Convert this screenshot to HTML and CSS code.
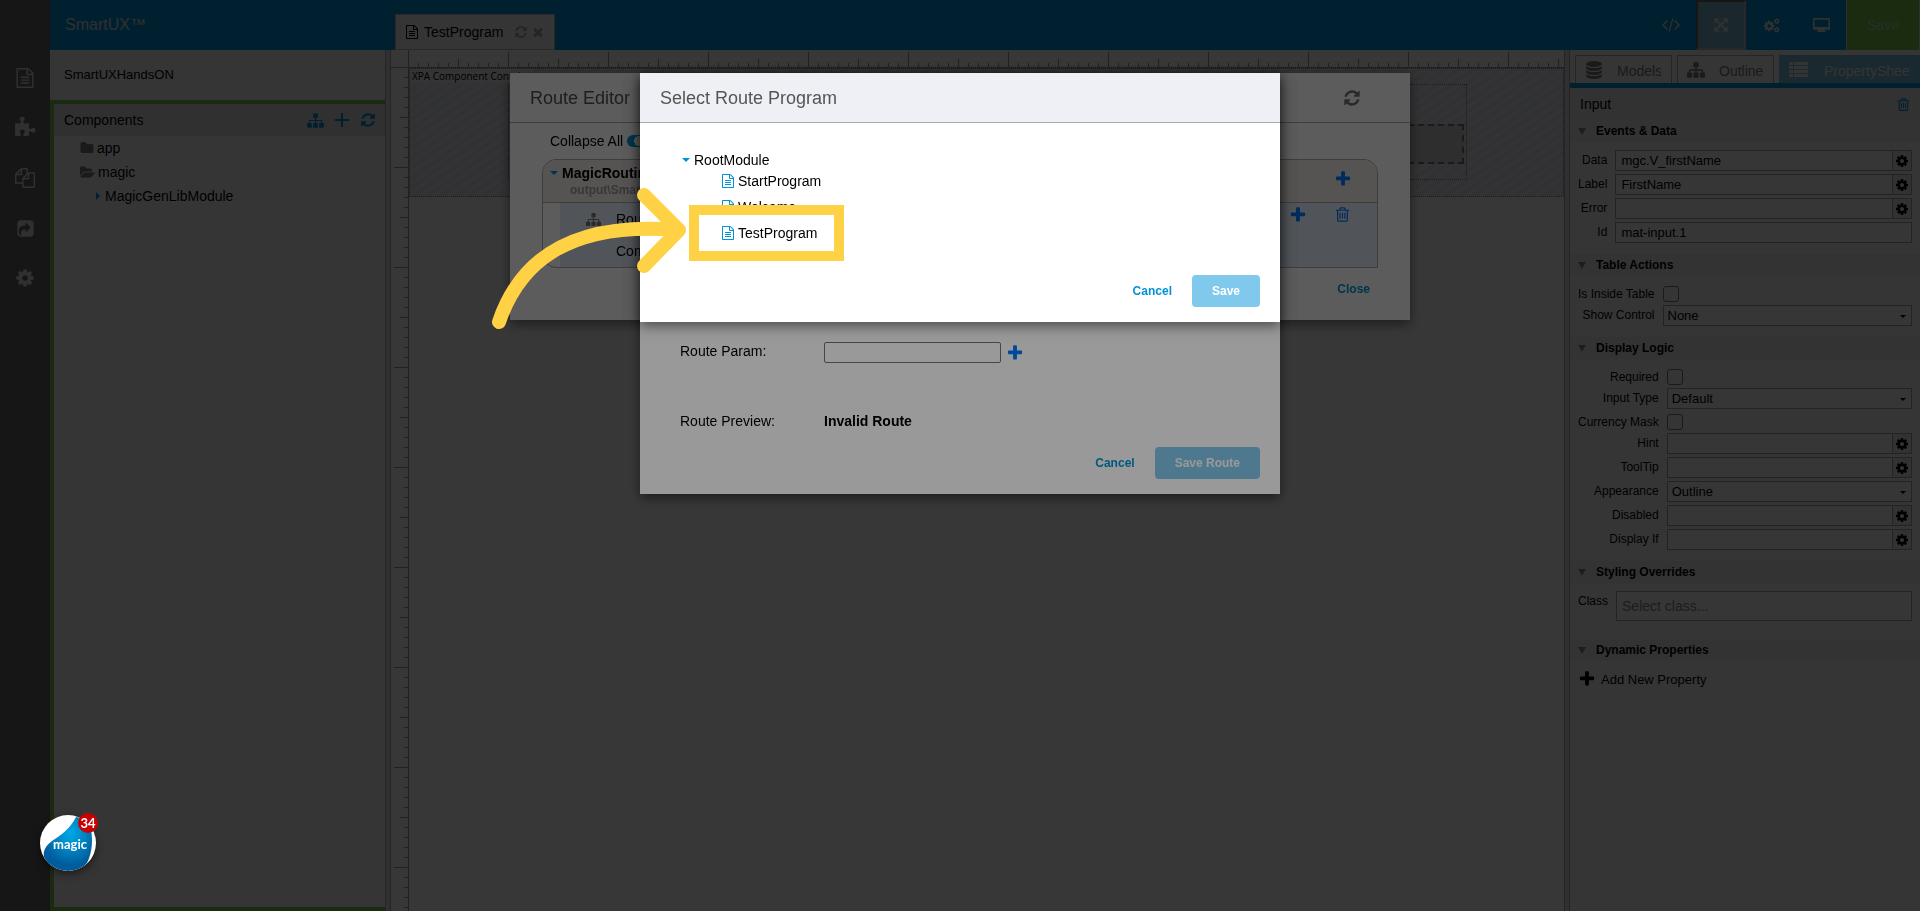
FILE: index.html
```html
<!DOCTYPE html>
<html lang="en">

<head>
    <meta charset="UTF-8">
    <meta name="viewport" content="width=device-width, initial-scale=1.0">
    <title>SmartUX</title>
    <link rel="stylesheet" href="styles.css">
</head>

<body>
    <!-- Icon set -->
    <svg class="sprite" aria-hidden="true">
        <symbol id="i-file" viewBox="0 0 1792 1792"><path d="M1596 380q28 28 48 76t20 88v1152q0 40-28 68t-68 28h-1344q-40 0-68-28t-28-68v-1600q0-40 28-68t68-28h896q40 0 88 20t76 48zm-444-244v376h376q-10-29-22-41l-313-313q-12-12-41-22zm384 1528v-1024h-416q-40 0-68-28t-28-68v-416h-768v1536h1280zm-1024-864q0-14 9-23t23-9h704q14 0 23 9t9 23v64q0 14-9 23t-23 9h-704q-14 0-23-9t-9-23v-64zm736 224q14 0 23 9t9 23v64q0 14-9 23t-23 9h-704q-14 0-23-9t-9-23v-64q0-14 9-23t23-9h704zm0 256q14 0 23 9t9 23v64q0 14-9 23t-23 9h-704q-14 0-23-9t-9-23v-64q0-14 9-23t23-9h704z"/></symbol>
        <symbol id="i-puzzle" viewBox="0 0 1792 1792"><path d="M1755 1082q0 81-44.5 135t-123.5 54q-41 0-77.5-17.5t-59-38-56.5-38-71-17.5q-110 0-110 124 0 39 16 115t15 115v5q-22 0-33 1-34 3-97.5 11.5t-115.5 13.5-98 5q-61 0-103-26.5t-42-83.5q0-37 17.5-71t38-56.5 38-59 17.5-77.5q0-79-54-123.5t-135-44.5q-84 0-143 45.5t-59 127.5q0 43 15 83t33.5 64.5 33.5 53 15 50.5q0 45-46 89-37 35-117 35-95 0-245-24-9-2-27.5-4t-27.5-4l-13-2q-1 0-3-1-2 0-2-1v-1024q2 1 17.5 3.5t34 5 21.5 3.5q150 24 245 24 80 0 117-35 46-44 46-89 0-22-15-50.5t-33.5-53-33.5-64.5-15-83q0-82 59-127.5t144-45.5q80 0 134 44.5t54 123.5q0 41-17.5 77.5t-38 59-38 56.5-17.5 71q0 57 42 83.5t103 26.5q64 0 180-15t163-17v2q-1 2-3.5 17.5t-5 34-3.5 21.5q-24 150-24 245 0 80 35 117 44 46 89 46 22 0 50.5-15t53-33.5 64.5-33.5 83-15q82 0 127.5 59t45.5 143z"/></symbol>
        <symbol id="i-files" viewBox="0 0 1792 1792"><path d="M1696 384q40 0 68 28t28 68v1216q0 40-28 68t-68 28h-960q-40 0-68-28t-28-68v-288h-544q-40 0-68-28t-28-68v-672q0-40 20-88t48-76l408-408q28-28 76-48t88-20h416q40 0 68 28t28 68v328q68-40 128-40h416zm-544 213l-299 299h299v-299zm-640-384l-299 299h299v-299zm196 647l316-316v-416h-384v416q0 40-28 68t-68 28h-416v640h512v-256q0-40 20-88t48-76zm956 804v-1152h-384v416q0 40-28 68t-68 28h-416v640h896z"/></symbol>
        <symbol id="i-share" viewBox="0 0 1792 1792"><path d="M1005 1197l352-352q19-19 19-45t-19-45l-352-352q-30-31-70-14-39 17-39 59v160q-119 0-216 19.5t-162.5 51-114 79-76.5 95.5-44.5 109-21.5 111.5-5 110.5q0 181 167 404 11 12 25 12 7 0 13-3 22-9 19-33-44-354 62-473 46-52 130-75.5t224-23.5v160q0 42 39 59 13 5 25 5 26 0 45-19zm659-781v960q0 119-84.5 203.5t-203.5 84.5h-960q-119 0-203.5-84.5t-84.5-203.5v-960q0-119 84.5-203.5t203.5-84.5h960q119 0 203.5 84.5t84.5 203.5z"/></symbol>
        <symbol id="i-cog" viewBox="0 0 1792 1792"><path d="M1152 896q0-106-75-181t-181-75-181 75-75 181 75 181 181 75 181-75 75-181zm512-109v222q0 12-8 23t-20 13l-185 28q-19 54-39 91 35 50 107 138 10 12 10 25t-9 23q-27 37-99 108t-94 71q-12 0-26-9l-138-108q-44 23-91 38-16 136-29 186-7 28-36 28h-222q-14 0-24.5-8.5t-11.5-21.5l-28-184q-49-16-90-37l-141 107q-10 9-25 9-14 0-25-11-126-114-165-168-7-10-7-23 0-12 8-23 15-21 51-66.5t54-70.5q-27-50-41-99l-183-27q-13-2-21-12.5t-8-23.5v-222q0-12 8-23t19-13l186-28q14-46 39-92-40-57-107-138-10-12-10-24 0-10 9-23 26-36 98.5-107.5t94.5-71.5q13 0 26 10l138 107q44-23 91-38 16-136 29-186 7-28 36-28h222q14 0 24.5 8.5t11.5 21.5l28 184q49 16 90 37l142-107q9-9 24-9 13 0 25 10 129 119 165 170 7 8 7 22 0 12-8 23-15 21-51 66.5t-54 70.5q26 50 41 98l183 28q13 2 21 12.5t8 23.5z"/></symbol>
        <symbol id="i-cogs" viewBox="0 0 18 16"><use href="#i-cog" x="0" y="2" width="13" height="13"/><use href="#i-cog" x="11" y="0" width="7" height="7"/><use href="#i-cog" x="11" y="9" width="7" height="7"/></symbol>
        <symbol id="i-sitemap" viewBox="0 0 1792 1792"><path d="M1792 1248v320q0 40-28 68t-68 28h-320q-40 0-68-28t-28-68v-320q0-40 28-68t68-28h96v-192h-512v192h96q40 0 68 28t28 68v320q0 40-28 68t-68 28h-320q-40 0-68-28t-28-68v-320q0-40 28-68t68-28h96v-192h-512v192h96q40 0 68 28t28 68v320q0 40-28 68t-68 28h-320q-40 0-68-28t-28-68v-320q0-40 28-68t68-28h96v-192q0-52 38-90t90-38h512v-192h-96q-40 0-68-28t-28-68v-320q0-40 28-68t68-28h320q40 0 68 28t28 68v320q0 40-28 68t-68 28h-96v192h512q52 0 90 38t38 90v192h96q40 0 68 28t28 68z"/></symbol>
        <symbol id="i-plus" viewBox="0 0 1792 1792"><path d="M1600 736v192q0 40-28 68t-68 28h-416v416q0 40-28 68t-68 28h-192q-40 0-68-28t-28-68v-416h-416q-40 0-68-28t-28-68v-192q0-40 28-68t68-28h416v-416q0-40 28-68t68-28h192q40 0 68 28t28 68v416h416q40 0 68 28t28 68z"/></symbol>
        <symbol id="i-plus-thin" viewBox="0 0 14 14"><path d="M6 0h2v6h6v2h-6v6h-2v-6h-6v-2h6z"/></symbol>
        <symbol id="i-refresh" viewBox="0 0 1792 1792"><path d="M1639 1056q0 5-1 7-64 268-268 434.5t-478 166.5q-146 0-282.5-55t-243.5-157l-129 129q-19 19-45 19t-45-19-19-45v-448q0-26 19-45t45-19h448q26 0 45 19t19 45-19 45l-137 137q71 66 161 102t187 36q134 0 250-65t186-179q11-17 53-117 8-23 30-23h192q13 0 22.5 9.5t9.5 22.5zm25-800v448q0 26-19 45t-45 19h-448q-26 0-45-19t-19-45 19-45l138-138q-148-137-349-137-134 0-250 65t-186 179q-11 17-53 117-8 23-30 23h-199q-13 0-22.5-9.5t-9.5-22.5v-7q65-268 270-434.5t480-166.5q146 0 284 55.5t245 156.5l130-129q19-19 45-19t45 19 19 45z"/></symbol>
        <symbol id="i-times" viewBox="0 0 1792 1792"><path d="M1490 1322q0 40-28 68l-136 136q-28 28-68 28t-68-28l-294-294-294 294q-28 28-68 28t-68-28l-136-136q-28-28-28-68t28-68l294-294-294-294q-28-28-28-68t28-68l136-136q28-28 68-28t68 28l294 294 294-294q28-28 68-28t68 28l136 136q28 28 28 68t-28 68l-294 294 294 294q28 28 28 68z"/></symbol>
        <symbol id="i-folder" viewBox="0 0 1792 1792"><path d="M1728 608v704q0 92-66 158t-158 66h-1216q-92 0-158-66t-66-158v-960q0-92 66-158t158-66h320q92 0 158 66t66 158v32h672q92 0 158 66t66 158z"/></symbol>
        <symbol id="i-folder-open" viewBox="0 0 1920 1792"><path d="M1879 952q0 31-31 66l-336 396q-43 51-120.5 86.5t-143.5 35.5h-1088q-34 0-60.5-13t-26.5-43q0-31 31-66l336-396q43-51 120.5-86.5t143.5-35.5h1088q34 0 60.5 13t26.5 43zm-343-344v160h-832q-94 0-197 47.5t-164 119.5l-337 396-5 6q0-4-.5-12.5t-.5-12.5v-960q0-92 66-158t158-66h320q92 0 158 66t66 158v32h544q92 0 158 66t66 158z"/></symbol>
        <symbol id="i-trash" viewBox="0 0 1792 1792"><path d="M704 736v576q0 14-9 23t-23 9h-64q-14 0-23-9t-9-23v-576q0-14 9-23t23-9h64q14 0 23 9t9 23zm256 0v576q0 14-9 23t-23 9h-64q-14 0-23-9t-9-23v-576q0-14 9-23t23-9h64q14 0 23 9t9 23zm256 0v576q0 14-9 23t-23 9h-64q-14 0-23-9t-9-23v-576q0-14 9-23t23-9h64q14 0 23 9t9 23zm128 724v-948h-896v948q0 22 7 40.5t14.5 27 10.5 8.5h832q3 0 10.5-8.5t14.5-27 7-40.5zm-672-1076h448l-48-117q-7-9-17-11h-317q-10 2-17 11zm928 32v64q0 14-9 23t-23 9h-96v948q0 83-47 143.5t-113 60.5h-832q-66 0-113-58.5t-47-141.5v-952h-96q-14 0-23-9t-9-23v-64q0-14 9-23t23-9h309l70-167q15-37 54-63t79-26h320q40 0 79 26t54 63l70 167h309q14 0 23 9t9 23z"/></symbol>
        <symbol id="i-code" viewBox="0 0 2048 1920"><path d="M681 1399l-50 50q-10 10-23 10t-23-10l-466-466q-10-10-10-23t10-23l466-466q10-10 23-10t23 10l50 50q10 10 10 23t-10 23l-393 393 393 393q10 10 10 23t-10 23zm591-1067l-373 1291q-4 13-15.5 19.5t-23.5 2.5l-62-17q-13-4-19.5-15.5t-2.5-24.5l373-1291q4-13 15.5-19.5t23.5-2.5l62 17q13 4 19.5 15.5t2.5 24.5zm657 651l-466 466q-10 10-23 10t-23-10l-50-50q-10-10-10-23t10-23l393-393-393-393q-10-10-10-23t10-23l50-50q10-10 23-10t23 10l466 466q10 10 10 23t-10 23z"/></symbol>
        <symbol id="i-expand" viewBox="0 0 1792 1792"><path d="M1411 541l-355 355 355 355 144-144q29-31 70-14 39 17 39 59v448q0 26-19 45t-45 19h-448q-42 0-59-40-17-39 14-69l144-144-355-355-355 355 144 144q31 30 14 69-17 40-59 40h-448q-26 0-45-19t-19-45v-448q0-42 40-59 39-17 69 14l144 144 355-355-355-355-144 144q-19 19-45 19-12 0-24-5-40-17-40-59v-448q0-26 19-45t45-19h448q42 0 59 40 17 39-14 69l-144 144 355 355 355-355-144-144q-31-30-14-69 17-40 59-40h448q26 0 45 19t19 45v448q0 42-39 59-13 5-25 5-26 0-45-19z"/></symbol>
        <symbol id="i-desktop" viewBox="0 0 16 14"><path fill-rule="evenodd" d="M1 0h14a1 1 0 0 1 1 1v9a1 1 0 0 1-1 1h-4v1h1v1h-8v-1h1v-1h-4a1 1 0 0 1-1-1v-9a1 1 0 0 1 1-1zm.5 1.500v7h13v-7z"/></symbol>
        <symbol id="i-database" viewBox="0 0 16 18"><ellipse cx="8" cy="3" rx="8" ry="3"/><path d="M0 5q2 2 8 2t8-2v2q-1 3-8 3t-8-3zM0 9q2 2 8 2t8-2v2q-1 3-8 3t-8-3zM0 13q2 2 8 2t8-2v2q-1 3-8 3t-8-3z"/></symbol>
        <symbol id="i-list" viewBox="0 0 19 15"><path d="M0 0h4v3h-4zM5 0h14v3h-14zM0 4h4v3h-4zM5 4h14v3h-14zM0 8h4v3h-4zM5 8h14v3h-14zM0 12h4v3h-4zM5 12h14v3h-14z"/></symbol>
    </svg>

    <div class="app">
        <nav class="rail">
            <button aria-label="Programs"><svg class="icon icon-20"><use href="#i-file"/></svg></button>
            <button aria-label="Components"><svg class="icon icon-22"><use href="#i-puzzle"/></svg></button>
            <button aria-label="Templates"><svg class="icon icon-20"><use href="#i-files"/></svg></button>
            <button aria-label="Publish"><svg class="icon icon-19"><use href="#i-share"/></svg></button>
            <button aria-label="Settings"><svg class="icon icon-20"><use href="#i-cog"/></svg></button>
        </nav>

        <div class="main">
            <header class="topbar">
                <div class="brand">SmartUX™</div>
                <div class="file-tab">
                    <svg class="icon icon-14"><use href="#i-file"/></svg>
                    <span>TestProgram</span>
                    <button aria-label="Reload"><svg class="icon icon-14"><use href="#i-refresh"/></svg></button>
                    <button aria-label="Close tab"><svg class="icon icon-14"><use href="#i-times"/></svg></button>
                </div>
                <div class="toolbar">
                    <button aria-label="Code"><svg class="icon icon-20"><use href="#i-code"/></svg></button>
                    <button class="pressed" aria-label="Fit"><svg class="icon icon-16"><use href="#i-expand"/></svg></button>
                    <button aria-label="Options"><svg class="icon icon-17"><use href="#i-cogs"/></svg></button>
                    <button aria-label="Preview"><svg class="icon icon-17"><use href="#i-desktop"/></svg></button>
                    <button class="save-main">Save</button>
                </div>
            </header>

            <div class="workspace">
                <aside class="left-panel">
                    <div class="project-name">SmartUXHandsON</div>
                    <div class="components">
                        <div class="components-head">
                            <span>Components</span>
                            <button aria-label="Tree view"><svg class="icon icon-17"><use href="#i-sitemap"/></svg></button>
                            <button aria-label="Add component"><svg class="icon icon-14"><use href="#i-plus-thin"/></svg></button>
                            <button aria-label="Refresh"><svg class="icon icon-16"><use href="#i-refresh"/></svg></button>
                        </div>
                        <ul class="folders">
                            <li><svg class="icon icon-14"><use href="#i-folder"/></svg>app</li>
                            <li><svg class="icon icon-15"><use href="#i-folder-open"/></svg>magic</li>
                            <li class="module"><i class="caret-right"></i>MagicGenLibModule</li>
                        </ul>
                    </div>
                </aside>
                <div class="splitter"></div>
                <main class="canvas">
                    <div class="ruler-corner"></div>
                    <div class="ruler-x"></div>
                    <div class="ruler-y"></div>
                    <div class="stage">
                        <div class="container-title">XPA Component Container</div>
                        <div class="drop-area">
                            <div class="drop-field"></div>
                        </div>
                    </div>
                </main>
                <div class="splitter"></div>

                <aside class="right-panel">
                    <div class="side-tabs">
                        <button><svg class="icon icon-18"><use href="#i-database"/></svg><span>Models</span></button>
                        <button><svg class="icon icon-18"><use href="#i-sitemap"/></svg><span>Outline</span></button>
                        <button class="active"><svg class="icon icon-19"><use href="#i-list"/></svg><span>PropertyShee</span></button>
                    </div>
                    <div class="sheet-head">
                        <span>Input</span>
                        <button aria-label="Delete"><svg class="icon icon-15"><use href="#i-trash"/></svg></button>
                    </div>

                    <h2 class="section">Events &amp; Data</h2>
                    <div class="props">
                        <label for="data">Data</label>
                        <div class="field"><input id="data" type="text" value="mgc.V_firstName"><button aria-label="Edit data"><svg class="icon icon-14"><use href="#i-cog"/></svg></button></div>
                        <label for="label">Label</label>
                        <div class="field"><input id="label" type="text" value="FirstName"><button aria-label="Edit label"><svg class="icon icon-14"><use href="#i-cog"/></svg></button></div>
                        <label for="error">Error</label>
                        <div class="field"><input id="error" type="text"><button aria-label="Edit error"><svg class="icon icon-14"><use href="#i-cog"/></svg></button></div>
                        <label for="id">Id</label>
                        <div class="field"><input id="id" type="text" value="mat-input.1"></div>
                    </div>

                    <h2 class="section">Table Actions</h2>
                    <div class="props">
                        <label for="inside">Is Inside Table</label>
                        <input id="inside" type="checkbox">
                        <label for="control">Show Control</label>
                        <div class="field select"><select id="control"><option>None</option></select></div>
                    </div>

                    <h2 class="section">Display Logic</h2>
                    <div class="props">
                        <label for="required">Required</label>
                        <input id="required" type="checkbox">
                        <label for="type">Input Type</label>
                        <div class="field select"><select id="type"><option>Default</option></select></div>
                        <label for="mask">Currency Mask</label>
                        <input id="mask" type="checkbox">
                        <label for="hint">Hint</label>
                        <div class="field"><input id="hint" type="text"><button aria-label="Edit hint"><svg class="icon icon-14"><use href="#i-cog"/></svg></button></div>
                        <label for="tooltip">ToolTip</label>
                        <div class="field"><input id="tooltip" type="text"><button aria-label="Edit tooltip"><svg class="icon icon-14"><use href="#i-cog"/></svg></button></div>
                        <label for="appearance">Appearance</label>
                        <div class="field select"><select id="appearance"><option>Outline</option></select></div>
                        <label for="disabled">Disabled</label>
                        <div class="field"><input id="disabled" type="text"><button aria-label="Edit disabled"><svg class="icon icon-14"><use href="#i-cog"/></svg></button></div>
                        <label for="displayIf">Display If</label>
                        <div class="field"><input id="displayIf" type="text"><button aria-label="Edit display if"><svg class="icon icon-14"><use href="#i-cog"/></svg></button></div>
                    </div>

                    <h2 class="section">Styling Overrides</h2>
                    <div class="props props-class">
                        <label for="class">Class</label>
                        <div class="field field-tall"><input id="class" type="text" placeholder="Select class..."></div>
                    </div>

                    <h2 class="section">Dynamic Properties</h2>
                    <button class="add-property"><svg class="icon icon-18"><use href="#i-plus"/></svg>Add New Property</button>
                </aside>
            </div>
        </div>
    </div>

    <!-- Route editor -->
    <div class="overlay">
        <div class="dialog dialog-wide">
            <div class="dialog-head">
                <h1>Route Editor</h1>
                <button aria-label="Refresh routes"><svg class="icon icon-18"><use href="#i-refresh"/></svg></button>
            </div>
            <div class="editor-body">
                <div class="collapse-row">
                    <label for="collapse">Collapse All</label>
                    <input id="collapse" class="toggle" type="checkbox" checked>
                </div>
                <div class="route-card">
                    <div class="route-card-head">
                        <i class="caret-down"></i>
                        <div class="route-name">
                            <strong>MagicRouting</strong>
                            <small>output\SmartUX</small>
                        </div>
                        <button aria-label="Add route"><svg class="icon icon-18"><use href="#i-plus"/></svg></button>
                    </div>
                    <div class="route-row">
                        <svg class="icon icon-15 route-icon"><use href="#i-sitemap"/></svg>
                        <div class="route-labels">
                            <span>Route</span>
                            <span>Component</span>
                        </div>
                        <button aria-label="Add child route"><svg class="icon icon-18"><use href="#i-plus"/></svg></button>
                        <button aria-label="Delete route"><svg class="icon icon-17"><use href="#i-trash"/></svg></button>
                    </div>
                </div>
            </div>
            <div class="editor-foot"><button class="link-btn">Close</button></div>
        </div>
    </div>

    <!-- Add route -->
    <div class="overlay">
        <div class="dialog dialog-route">
            <div class="route-form">
                <label for="param">Route Param:</label>
                <div class="param-field">
                    <input id="param" type="text">
                    <button aria-label="Add param"><svg class="icon icon-18"><use href="#i-plus"/></svg></button>
                </div>
                <span>Route Preview:</span>
                <strong>Invalid Route</strong>
            </div>
            <div class="dialog-foot">
                <button class="link-btn">Cancel</button>
                <button class="save-btn">Save Route</button>
            </div>
        </div>
    </div>

    <!-- Program picker -->
    <div class="overlay">
        <div class="dialog">
            <div class="dialog-head head-tinted">
                <h1>Select Route Program</h1>
            </div>
            <div class="program-tree">
                <div class="tree-root"><i class="caret-down"></i>RootModule</div>
                <ul class="programs">
                    <li><svg class="icon icon-14"><use href="#i-file"/></svg>StartProgram</li>
                    <li><svg class="icon icon-14"><use href="#i-file"/></svg>Welcome</li>
                    <li><svg class="icon icon-14"><use href="#i-file"/></svg>TestProgram</li>
                </ul>
            </div>
            <div class="dialog-foot">
                <button class="link-btn">Cancel</button>
                <button class="save-btn">Save</button>
            </div>
            <div class="highlight"></div>
            <svg class="arrow" viewBox="0 0 220 160">
                <path d="M19 139C38 83 84 37 199 47M164 12l35 35-35 36"/>
            </svg>
        </div>
    </div>

    <div class="magic-widget">
        <svg class="magic-drop" viewBox="0 0 56 56">
            <defs>
                <radialGradient id="drop" cx="0.55" cy="0.3" r="0.6">
                    <stop offset="0" stop-color="#00a9e6"/>
                    <stop offset="0.300" stop-color="#0094d2"/>
                    <stop offset="1" stop-color="#005c9c"/>
                </radialGradient>
            </defs>
            <path fill="url(#drop)" d="M36 2C30 14 21 20 12 26C2 33 2 42 7 47C13 53 21 56 28 56C38 56 45 52 48 46C52 36 53 26 51 15C48 9 43 3 36 2z"/>
        </svg>
        <span class="magic-text">magic</span>
        <span class="magic-badge">34</span>
    </div>
</body>

</html>
```
FILE: styles.css
```css
:root {
    --blue: #0093d9;
    --green: #7cc648;
    --panel: #f6f6f6;
    --strip: #e6e6e6;
    --line: #a0a0a0;
    --plus: #007bff;
}

* {
    box-sizing: border-box;
}

body {
    margin: 0;
    font-family: "Liberation Sans", Arial, sans-serif;
    font-size: 14px;
    color: #000;
    overflow: hidden;
}

button {
    display: flex;
    align-items: center;
    padding: 0;
    border: none;
    background: none;
    font: inherit;
    color: inherit;
    cursor: pointer;
}

h1,
h2,
ul {
    margin: 0;
    padding: 0;
    list-style: none;
}

.sprite {
    position: absolute;
    width: 0;
    height: 0;
}

.icon {
    display: block;
    flex: none;
    fill: currentColor;
}

.icon-14 { width: 14px; height: 14px; }
.icon-15 { width: 15px; height: 15px; }
.icon-16 { width: 16px; height: 16px; }
.icon-17 { width: 17px; height: 17px; }
.icon-18 { width: 18px; height: 18px; }
.icon-19 { width: 19px; height: 19px; }
.icon-20 { width: 20px; height: 20px; }
.icon-22 { width: 22px; height: 22px; }

.caret-down {
    flex: none;
    border: 4px solid transparent;
    border-top-color: var(--blue);
    border-bottom: none;
}

.caret-right {
    flex: none;
    border: 4px solid transparent;
    border-left-color: var(--blue);
    border-right: none;
}

/* Layout */
.app {
    display: flex;
    height: 100vh;
}

.rail {
    width: 50px;
    padding-top: 53px;
    background: #666;
    color: #ddd;
}

.rail button {
    width: 100%;
    height: 50px;
    justify-content: center;
}

.main {
    flex: 1;
    display: flex;
    flex-direction: column;
    min-width: 0;
}

.topbar {
    display: flex;
    height: 50px;
    background: var(--blue);
}

.brand {
    width: 345px;
    padding: 16px 15px;
    font-size: 16px;
    line-height: 18px;
    color: #ddd;
}

.file-tab {
    display: flex;
    align-items: center;
    align-self: flex-end;
    gap: 5px;
    height: 36px;
    padding: 0 9px;
    border: 1px solid #bbb;
    background: var(--panel);
}

.file-tab span {
    margin-right: 6px;
}

.file-tab button {
    color: #aaa;
}

.file-tab button + button {
    margin-left: -2px;
}

.toolbar {
    display: flex;
    margin-left: auto;
    color: #ddd;
}

.toolbar button {
    width: 50px;
    justify-content: center;
}

.toolbar .pressed {
    background: #78b8d4;
    border: 2px inset #bbb;
}

.toolbar .save-main {
    width: 74px;
    border-left: 1px solid #ddd;
    border-right: 1px solid #ddd;
    background: #7cc648;
    color: #b9d6a4;
}

.workspace {
    flex: 1;
    display: flex;
    min-height: 0;
}

.splitter {
    width: 6px;
    border: solid #aaa;
    border-width: 0 1px;
    background: #dedede;
}

/* Left panel */
.left-panel {
    display: flex;
    flex-direction: column;
    width: 335px;
    background: var(--panel);
}

.project-name {
    height: 50px;
    padding: 17px 14px;
    font-size: 13px;
    line-height: 16px;
}

.components {
    flex: 1;
    border: solid var(--green);
    border-width: 4px 0 4px 4px;
}

.components-head {
    display: flex;
    align-items: center;
    gap: 11px;
    height: 32px;
    padding: 0 9px 0 10px;
    background: #dedede;
}

.components-head span {
    flex: 1;
}

.components-head button {
    color: var(--blue);
}

.folders {
    padding-left: 26px;
}

.folders li {
    display: flex;
    align-items: center;
    gap: 3px;
    height: 24px;
}

.folders .icon {
    color: #777;
}

.folders .module {
    gap: 5px;
    padding-left: 16px;
}

/* Canvas */
.canvas {
    flex: 1;
    display: grid;
    grid-template: 18px 1fr / 18px 1fr;
    min-width: 0;
    background: #fcfcfc;
}

.ruler-corner,
.ruler-x {
    border-bottom: 1px solid #999;
}

.ruler-corner,
.ruler-y {
    border-right: 1px solid #999;
}

.ruler-x {
    background:
        linear-gradient(to left, #999 1px, transparent 1px) 0 100% / 10px 4px repeat-x,
        linear-gradient(to left, #999 1px, transparent 1px) 0 100% / 50px 8px repeat-x,
        linear-gradient(to left, #999 1px, transparent 1px) 0 100% / 100px 15px repeat-x;
}

.ruler-y {
    background:
        linear-gradient(to top, #999 1px, transparent 1px) 100% 0 / 4px 10px repeat-y,
        linear-gradient(to top, #999 1px, transparent 1px) 100% 0 / 8px 50px repeat-y,
        linear-gradient(to top, #999 1px, transparent 1px) 100% 0 / 14px 100px repeat-y;
}

.stage {
    align-self: start;
    height: 129px;
    border: 1px dotted #777;
    background: repeating-linear-gradient(145deg, #e2e3eb 0 4px, #e9eaf1 4px 8px);
}

.container-title {
    width: 124px;
    height: 14px;
    padding-left: 2px;
    background: #f2f2f2;
    font-family: "Open Sans", sans-serif;
    font-size: 10px;
    line-height: 14px;
    white-space: nowrap;
}

.drop-area {
    height: 96px;
    margin: 1px 96px 0 98px;
    padding: 39px 2px 0;
    border: 1px dotted #777;
}

.drop-field {
    height: 40px;
    border: 2px dashed #777;
    background: #d6d6d6;
}

/* Right panel */
.right-panel {
    width: 350px;
    background: var(--panel);
}

.side-tabs {
    display: flex;
    gap: 5px;
    height: 38px;
    padding: 5px 0 0 5px;
    border-bottom: 5px solid var(--blue);
}

.side-tabs button {
    gap: 14px;
    width: 97px;
    padding: 0 10px 0 9px;
    border: 1px solid #aaa;
    border-bottom: none;
    color: #777;
}

.side-tabs span {
    overflow: hidden;
    padding-top: 3px;
    white-space: nowrap;
}

.side-tabs .active {
    flex: 1;
    gap: 16px;
    padding-left: 10px;
    border: none;
    background: #78bcdc;
    color: #eee;
}

.sheet-head {
    display: flex;
    align-items: center;
    justify-content: space-between;
    height: 32px;
    padding: 0 9px 0 10px;
    background: var(--strip);
}

.sheet-head button {
    color: var(--blue);
}

.section {
    display: flex;
    align-items: center;
    gap: 10px;
    height: 22px;
    padding-left: 8px;
    background: #ececec;
    font-size: 12px;
}

.section::before {
    content: "";
    border: 4px solid transparent;
    border-top: 7px solid #888;
    border-bottom: none;
}

.props {
    display: grid;
    grid-template-columns: auto 1fr;
    gap: 3px 8px;
    padding: 8px 8px 11px;
}

.props label {
    padding-top: 3px;
    font-size: 12px;
    line-height: 14px;
    text-align: right;
}

.field {
    position: relative;
    display: flex;
    height: 21px;
    border: 1px solid var(--line);
}

.field input,
.field select {
    flex: 1;
    min-width: 0;
    padding: 0 5px;
    border: none;
    background: #f8f8f8;
    font: inherit;
    font-size: 13px;
    color: #000;
    appearance: none;
}

.field select {
    padding: 0 4px;
}

.select::after {
    content: "";
    position: absolute;
    top: 9px;
    right: 5px;
    border: 3px solid transparent;
    border-top-color: #000;
    border-bottom: none;
}

.field button {
    width: 19px;
    justify-content: center;
    border-left: 1px solid var(--line);
    background: #e6e6e6;
}

.props input[type="checkbox"] {
    width: 16px;
    height: 16px;
    margin: 2px 0 0;
    border: 1px solid #777;
    border-radius: 3px;
    appearance: none;
}

.props-class {
    padding-bottom: 18px;
}

.field-tall {
    height: 30px;
}

.field-tall input {
    font-size: 14px;
}

.field-tall input::placeholder {
    color: #888;
}

.add-property {
    gap: 5px;
    padding: 9px 8px;
    font-size: 13px;
}

/* Dialogs */
.overlay {
    position: fixed;
    inset: 0;
    display: flex;
    align-items: flex-start;
    justify-content: center;
    padding-top: 73px;
    background: rgba(0, 0, 0, 0.4);
}

.dialog {
    position: relative;
    width: 640px;
    background: #fff;
    box-shadow: 0 4px 12px rgba(0, 0, 0, 0.5);
}

.dialog-wide {
    width: 900px;
}

.dialog-head {
    display: flex;
    align-items: center;
    justify-content: space-between;
    height: 50px;
    padding: 0 49px 0 20px;
    border-bottom: 1px solid #aaa;
    color: #555;
}

.dialog-head h1 {
    padding-top: 2px;
    font-size: 18px;
    font-weight: normal;
}

.dialog-head button {
    color: #777;
}

.head-tinted {
    background: #eef0f5;
}

.link-btn {
    font-size: 12px;
    font-weight: bold;
    color: var(--blue);
}

.save-btn {
    height: 32px;
    padding: 0 20px;
    border-radius: 4px;
    background: #80c9ec;
    font-size: 12px;
    font-weight: bold;
    color: #fff;
}

.dialog-foot {
    display: flex;
    justify-content: flex-end;
    gap: 20px;
    padding: 0 20px 15px;
}

.editor-body {
    padding: 9px 32px 0;
}

.collapse-row {
    display: flex;
    align-items: center;
    gap: 4px;
    height: 18px;
    padding-left: 8px;
}

.toggle {
    width: 24px;
    height: 12px;
    margin: 0;
    border-radius: 6px;
    background: radial-gradient(circle at 12px 6px, #fff 5px, var(--blue) 5px);
    appearance: none;
}

.route-card {
    margin-top: 9px;
    border: 1px solid #aaa;
    border-radius: 14px 14px 0 14px;
    overflow: hidden;
}

.route-card-head {
    display: flex;
    align-items: flex-start;
    gap: 4px;
    height: 43px;
    padding: 4px 25px 0 7px;
    border-bottom: 1px solid #aaa;
    background: #f0e6e6;
}

.route-card-head .caret-down {
    margin-top: 7px;
}

.route-name {
    flex: 1;
    display: flex;
    flex-direction: column;
}

.route-name strong {
    line-height: 18px;
}

.route-name small {
    padding-left: 8px;
    font-size: 12px;
    font-weight: bold;
    line-height: 16px;
    color: #999;
}

.route-card-head button {
    margin-top: 6px;
    color: var(--plus);
}

.route-row {
    display: flex;
    align-items: flex-start;
    gap: 27px;
    height: 64px;
    margin-left: 17px;
    padding: 0 26px;
    background: #e2eaf5;
}

.route-row button {
    margin-top: 3px;
    color: var(--plus);
}

.route-icon {
    margin-top: 9px;
    color: #777;
}

.route-labels {
    flex: 1;
    display: flex;
    flex-direction: column;
    margin-left: -12px;
    line-height: 32px;
}

.editor-foot {
    display: flex;
    justify-content: flex-end;
    padding: 14px 40px 24px;
}

.dialog-route {
    padding-top: 269px;
}

.route-form {
    display: grid;
    grid-template-columns: 144px 1fr;
    row-gap: 49px;
    padding: 0 40px 17px;
    line-height: 18px;
}

.param-field {
    display: flex;
    align-items: center;
    gap: 5px;
    height: 21px;
}

.param-field input {
    width: 177px;
    height: 21px;
    border: 1px solid #767676;
    border-radius: 2px;
}

.param-field button {
    color: var(--plus);
}

.program-tree {
    padding: 28px 42px 29px;
}

.tree-root {
    display: flex;
    align-items: center;
    gap: 4px;
    height: 17px;
}

.programs {
    padding-left: 39px;
}

.programs li {
    display: flex;
    align-items: center;
    gap: 3px;
    height: 26px;
}

.programs .icon {
    color: var(--blue);
}

/* Tour highlight on top of the picker */
.highlight {
    position: absolute;
    top: 132px;
    left: 49px;
    width: 155px;
    height: 56px;
    border: 10px solid #ffd145;
}

.arrow {
    position: absolute;
    top: 110px;
    left: -160px;
    width: 220px;
    height: 160px;
    fill: none;
    stroke: #ffd145;
    stroke-width: 14;
    stroke-linecap: round;
    stroke-linejoin: round;
}

.magic-widget {
    position: fixed;
    left: 40px;
    bottom: 40px;
    display: flex;
    align-items: center;
    justify-content: center;
    width: 56px;
    height: 56px;
    border-radius: 50%;
    background: #fff;
    box-shadow: 0 3px 8px rgba(0, 0, 0, 0.5);
}

.magic-drop {
    position: absolute;
    inset: 0;
    border-radius: 50%;
}

.magic-text {
    position: relative;
    padding: 2px 0 0 4px;
    font-family: Lato, sans-serif;
    font-size: 13px;
    font-weight: bold;
    line-height: 16px;
    color: #fff;
}

.magic-badge {
    position: absolute;
    top: -2px;
    right: -2px;
    width: 20px;
    height: 20px;
    border-radius: 50%;
    background: #c90000;
    font-family: Lato, sans-serif;
    font-size: 13px;
    font-weight: bold;
    line-height: 20px;
    text-align: center;
    color: #fff;
}
```
